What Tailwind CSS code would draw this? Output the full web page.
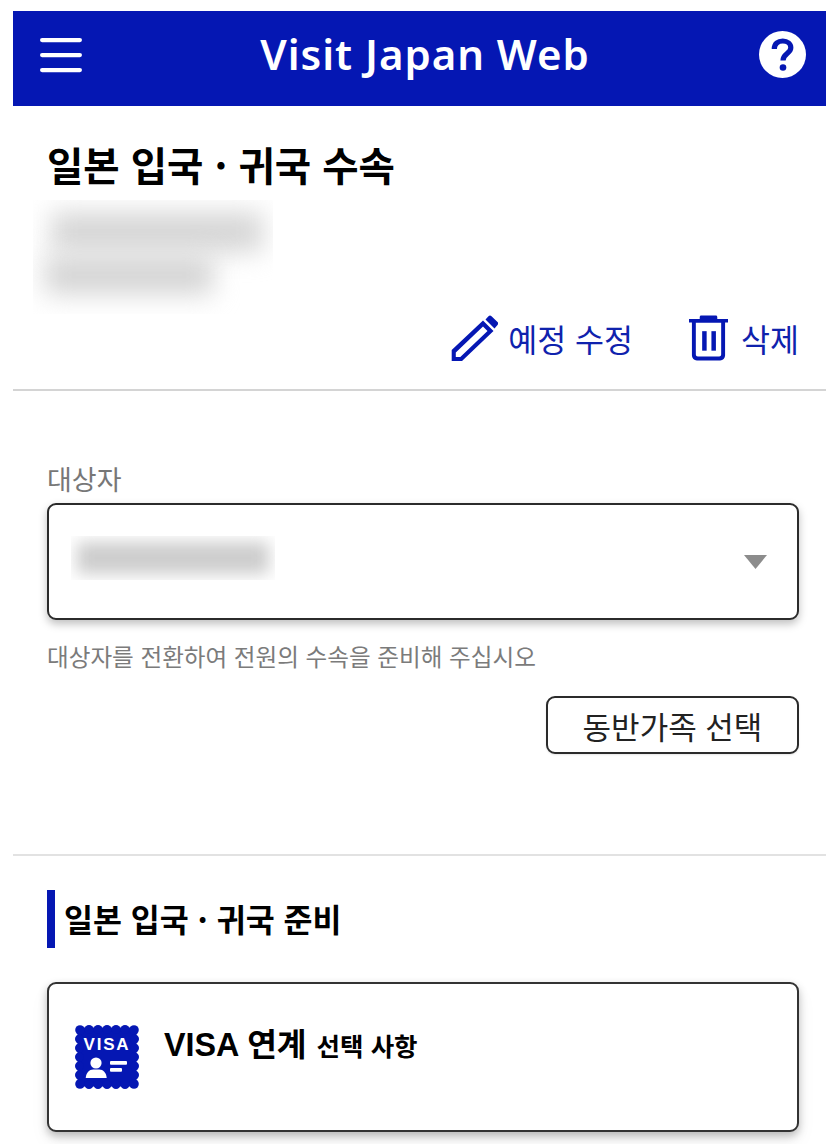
<!DOCTYPE html>
<html lang="ko">
<head>
<meta charset="utf-8">
<script src="https://cdn.jsdelivr.net/npm/@tailwindcss/browser@4"></script>
</head>
<body class="bg-white">
<div class="w-[826px] h-[1144px] overflow-hidden pt-[11px] pl-[13px] bg-white text-black font-['Noto_Sans_CJK_KR','Noto_Sans',sans-serif]">
  <header class="h-[95px] bg-[#0517b3] flex items-center justify-between pl-[27px] pr-[20px]">
    <svg class="w-[42px] h-[36px] -mt-[7px]" viewBox="0 0 42 36"><g fill="#fff"><rect x="0" y="1" width="42" height="4.200" rx="2.100"/><rect x="0" y="16" width="42" height="4.200" rx="2.100"/><rect x="0" y="31" width="42" height="4.200" rx="2.100"/></g></svg>
    <div class="text-white font-semibold text-[42px] leading-none tracking-[0.95px] font-['Noto_Sans',sans-serif] -mt-[10px] ml-[9px]">Visit Japan Web</div>
    <svg class="w-[47px] h-[47px] -mt-[9px]" viewBox="0 0 47 47"><circle cx="23.500" cy="23.500" r="23.500" fill="#fff"/><path d="M15.300 18C15.300 12.800 19 10 23.800 10 28.500 10 31.800 12.800 31.800 16.800 31.800 22.500 24 22.800 24 29.500" fill="none" stroke="#0517b3" stroke-width="5.200"/><circle cx="24" cy="36.500" r="3.300" fill="#0517b3"/></svg>
  </header>

  <section class="h-[285px] border-b-2 border-[#d4d4d4] pl-[34px] pr-[27px] pt-[33px] flex flex-col">
    <h1 class="text-[39.5px] leading-[50px] font-bold h-[50px] whitespace-nowrap">일본 입국 · 귀국 수속</h1>
    <div class="mt-[11px] -ml-[14px] w-[240px] h-[114px] overflow-hidden relative shrink-0">
      <div class="absolute left-[18px] top-[12px] w-[212px] h-[40px] bg-[#d6d6d6] blur-[13px]"></div>
      <div class="absolute left-[12px] top-[56px] w-[168px] h-[38px] bg-[#d4d4d4] blur-[13px]"></div>
    </div>
    <div class="flex justify-end items-center mt-[1px] text-[31.5px] leading-[44px] text-[#0f22ad]">
      <svg class="w-[47px] h-[46px] mr-[10px]" viewBox="0 0 47 46"><path fill="#0517b3" fill-rule="evenodd" d="M.7 35 32 5.500 42.500 16 11 46H.7zM4.800 37.500v4.500h4.500L36.500 16 32 11.500z"/><path fill="#0517b3" d="M34.500 4.500 37.500 1.200a2.200 2.200 0 0 1 3 0L46.500 7a2.200 2.200 0 0 1 0 3L43.500 13.500z"/></svg>
      <span>예정 수정</span>
      <svg class="w-[39px] h-[46px] ml-[56px] mr-[13px]" viewBox="0 0 40 46"><g fill="#0517b3"><path d="M11 1.500A1.500 1.500 0 0 1 12.500 0h15A1.500 1.500 0 0 1 29 1.500V3.500h11V7H0V3.500h11z"/><path fill-rule="evenodd" d="M3 6h34v35a5 5 0 0 1-5 5H8a5 5 0 0 1-5-5zM7 7v33a2 2 0 0 0 2 2h22a2 2 0 0 0 2-2V7z"/><rect x="13.500" y="16" width="4.600" height="20"/><rect x="23" y="16" width="4.600" height="20"/></g></svg>
      <span>삭제</span>
    </div>
  </section>

  <section class="h-[465px] border-b-2 border-[#e2e2e2] pl-[34px] pr-[27px] pt-[69px] flex flex-col">
    <div class="text-[27px] leading-[38px] text-[#777]">대상자</div>
    <div class="mt-[5px] h-[117px] w-[752px] shrink-0 rounded-[9px] border-2 border-[#2b2b2b] bg-white shadow-[0_4px_8px_rgba(0,0,0,0.25)] flex items-center justify-between pl-[22px] pr-[30px]">
      <div class="w-[204px] h-[44px] overflow-hidden relative -mt-[8px]">
        <div class="absolute left-[6px] top-[6px] w-[192px] h-[32px] bg-[#cdcdcd] blur-[8px]"></div>
      </div>
      <svg class="w-[23px] h-[14px]" viewBox="0 0 23 14"><path d="M0 0h23L11.500 14z" fill="#8c8c8c"/></svg>
    </div>
    <div class="mt-[20px] text-[23.6px] leading-[32px] text-[#7b7b7b] whitespace-nowrap">대상자를 전환하여 전원의 수속을 준비해 주십시오</div>
    <div class="flex justify-end mt-[24px]">
      <button class="w-[253px] h-[58px] rounded-[9px] border-2 border-[#2b2b2b] bg-white text-[31px] leading-none text-[#222] shadow-[0_1px_2px_rgba(0,0,0,0.1)]">동반가족 선택</button>
    </div>
  </section>

  <section class="pl-[34px] pr-[27px] pt-[34px]">
    <div class="flex items-center h-[58px]">
      <div class="w-[8px] h-[58px] bg-[#0517b3]"></div>
      <h2 class="ml-[9px] -mt-[2px] text-[31.5px] leading-[46px] font-bold whitespace-nowrap">일본 입국 · 귀국 준비</h2>
    </div>
    <div class="mt-[34px] w-[752px] h-[150px] rounded-[9px] border-2 border-[#333] bg-white shadow-[0_4px_8px_rgba(0,0,0,0.25),0_10px_20px_rgba(0,0,0,0.05)] flex items-start pl-[26px] pt-[41px]">
      <svg class="w-[64px] h-[64px] shrink-0" viewBox="0 0 64 64">
        <g fill="#0517b3">
          <rect x="2.500" y="2.500" width="59" height="59"/>
          <circle cx="5" cy="5" r="4.800"/><circle cx="14" cy="4.500" r="4.500"/><circle cx="23" cy="4.500" r="4.500"/><circle cx="32" cy="4.500" r="4.500"/><circle cx="41" cy="4.500" r="4.500"/><circle cx="50" cy="4.500" r="4.500"/><circle cx="59" cy="5" r="4.800"/>
          <circle cx="5" cy="59" r="4.800"/><circle cx="14" cy="59.500" r="4.500"/><circle cx="23" cy="59.500" r="4.500"/><circle cx="32" cy="59.500" r="4.500"/><circle cx="41" cy="59.500" r="4.500"/><circle cx="50" cy="59.500" r="4.500"/><circle cx="59" cy="59" r="4.800"/>
          <circle cx="4.500" cy="14" r="4.500"/><circle cx="4.500" cy="23" r="4.500"/><circle cx="4.500" cy="32" r="4.500"/><circle cx="4.500" cy="41" r="4.500"/><circle cx="4.500" cy="50" r="4.500"/>
          <circle cx="59.500" cy="14" r="4.500"/><circle cx="59.500" cy="23" r="4.500"/><circle cx="59.500" cy="32" r="4.500"/><circle cx="59.500" cy="41" r="4.500"/><circle cx="59.500" cy="50" r="4.500"/>
        </g>
        <text x="32" y="25" text-anchor="middle" fill="#fff" font-family="Liberation Sans, sans-serif" font-weight="700" font-size="17" letter-spacing="1.800">VISA</text>
        <g fill="#fff"><circle cx="21" cy="38" r="5.600"/><path d="M10.700 53c.6-5.500 3.500-8.500 7.500-8.500h6c4 0 7 3 7.500 8.500z"/><rect x="35" y="36" width="17" height="3.800" rx="1"/><rect x="35" y="43" width="12" height="3.800" rx="1"/></g>
      </svg>
      <div class="ml-[25px] -mt-[2px] flex items-baseline whitespace-nowrap">
        <span class="font-['Liberation_Sans','Noto_Sans_CJK_KR',sans-serif] text-[32.3px] leading-[44px] font-bold">VISA 연계</span>
        <span class="ml-[10px] text-[25.5px] font-bold leading-[44px]">선택 사항</span>
      </div>
    </div>
  </section>
</div>
</body>
</html>
